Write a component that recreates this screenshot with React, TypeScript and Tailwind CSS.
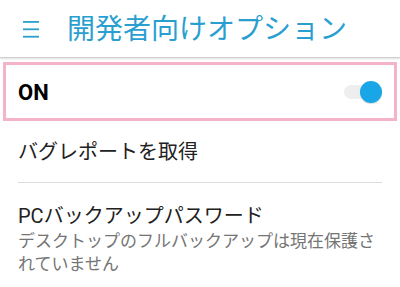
export default function App() {
  return (
    <div
      className="w-[400px] h-[287px] overflow-hidden bg-white"
      style={{ fontFamily: 'Roboto, "Noto Sans CJK JP", sans-serif' }}
    >
      {/* Header */}
      <div className="h-[58px] flex items-center border-b border-[#cfcfcf] shadow-[0_1px_2px_rgba(0,0,0,0.12)]">
        <svg className="ml-[23px] w-[16px] h-[18px]" viewBox="0 0 16 18">
          <rect x="0" y="1" width="16" height="1.8" fill="#2a9fcf" />
          <rect x="0" y="8.4" width="16" height="1.8" fill="#2a9fcf" />
          <rect x="0" y="15.8" width="16" height="1.8" fill="#2a9fcf" />
        </svg>
        <h1 className="ml-[28px] text-[28px] leading-none text-[#2a9fcf] pt-[3px]">
          開発者向けオプション
        </h1>
      </div>

      {/* ON row */}
      <div className="mt-[4px] mx-[3px] h-[59px] border-[3px] border-[#f4b3ca] flex items-center justify-between pl-[12px] pr-[12px]">
        <span className="text-[22px] font-bold text-black pt-[1px]">ON</span>
        <div className="relative w-[38px] h-[22px] flex items-center">
          <div className="w-[34px] h-[14px] rounded-full bg-[#eeeeee]" />
          <div className="absolute right-0 top-0 w-[22px] h-[22px] rounded-full bg-[#18a6e6] shadow-[0_1px_1px_rgba(0,0,0,0.15)]" />
        </div>
      </div>

      {/* Bug report */}
      <div className="mx-[18px] h-[62px] flex items-center border-b border-[#dcdcdc]">
        <span className="text-[20px] text-[#212121] pt-[1px]">バグレポートを取得</span>
      </div>

      {/* PC backup password */}
      <div className="mx-[18px] pt-[20px]">
        <p className="text-[20px] leading-[26px] text-[#212121]">PCバックアップパスワード</p>
        <p className="text-[17px] leading-[23px] text-[#757575] mt-[1px]">
          デスクトップのフルバックアップは現在保護されていません
        </p>
      </div>
    </div>
  );
}
